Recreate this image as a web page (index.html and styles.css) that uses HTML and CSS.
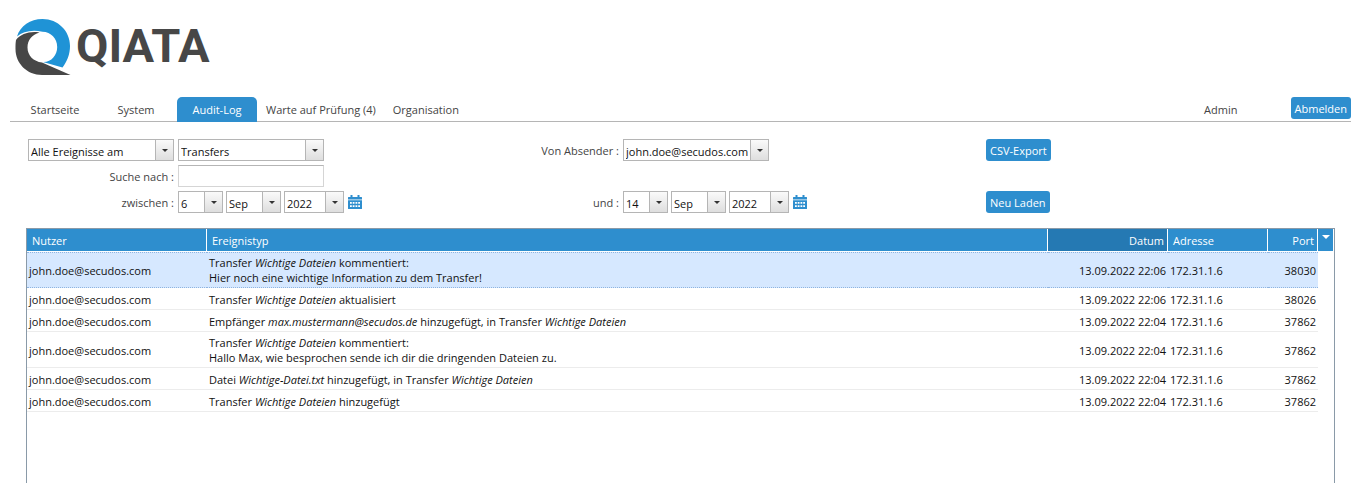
FILE: index.html
```
<!DOCTYPE html>
<html lang="de">
<head>
  <meta charset="UTF-8" />
  <meta name="viewport" content="width=device-width, initial-scale=1.0"/>
  <title>QIATA - Audit-Log</title>
  <link rel="stylesheet" href="styles.css">
</head>
<body>
  <header class="brand">
    <svg class="brand-mark" width="56" height="58" viewBox="0 0 56 58" aria-hidden="true">
      <path fill="#1f93d6" d="M2 18.500C5.500 7.500 15 1 27.500 1 43 1 55 13 55 28c0 8.500-3 15.500-7.500 21.500L28 44c8 .5 14.200-6.500 14.200-15C42.200 20.500 36 14 27.500 13.800 17 11.500 8 13.500 2 18.500z"/>
      <path fill="#474747" d="M1 22C6 15.800 14.500 13 24.500 14.500 17 16.500 12.500 22 12.500 29.500c0 8 6 14 14.500 15L55.500 57H27C12 57 .5 45.500 .5 31c0-3.500 0-6 .5-9z"/>
    </svg>
    <span class="brand-name">QIATA</span>
  </header>

  <nav class="tabs">
    <a class="tab" href="#">Startseite</a>
    <a class="tab" href="#">System</a>
    <a class="tab active" href="#">Audit-Log</a>
    <a class="tab" href="#">Warte auf Prüfung (4)</a>
    <a class="tab" href="#">Organisation</a>
    <span class="user">Admin</span>
    <button class="btn" type="button">Abmelden</button>
  </nav>

  <form class="filters">
    <span class="combo"><select aria-label="Zeitraum"><option>Alle Ereignisse am</option></select></span>
    <span class="combo combo-wide"><select aria-label="Bereich"><option>Transfers</option></select></span>
    <label for="sender">Von Absender :</label>
    <span class="combo combo-wide"><select id="sender"><option>john.doe@secudos.com</option></select></span>
    <div><button class="btn" type="button">CSV-Export</button></div>

    <label class="first" for="search">Suche nach :</label>
    <input class="search" id="search" type="text">

    <label class="first" for="fromDay">zwischen :</label>
    <div class="date">
      <span class="combo day"><select id="fromDay"><option>6</option></select></span>
      <span class="combo month"><select aria-label="Monat von"><option>Sep</option></select></span>
      <span class="combo year"><select aria-label="Jahr von"><option>2022</option></select></span>
      <button class="calendar" type="button" aria-label="Kalender">
        <svg width="14" height="14" viewBox="0 0 14 14">
          <path fill="#2e8ece" d="M0 2.500Q0 2 .5 2H2.500V0h2v2h5V0h2v2h2q.5 0 .5.500V4.500H0zM0 5.300h14v8.200q0 .5-.5.500H.5q-.5 0-.5-.5z"/>
          <path fill="#fff" d="M2 7h1.800v1.800H2zM4.700 7h1.800v1.800H4.700zM7.500 7h1.800v1.800H7.500zM10.200 7H12v1.800h-1.800zM2 10.200h1.800V12H2zM4.700 10.200h1.800V12H4.700zM7.500 10.200h1.800V12H7.500zM10.200 10.200H12V12h-1.800z"/>
        </svg>
      </button>
    </div>
    <label for="toDay">und :</label>
    <div class="date">
      <span class="combo day"><select id="toDay"><option>14</option></select></span>
      <span class="combo month"><select aria-label="Monat bis"><option>Sep</option></select></span>
      <span class="combo year"><select aria-label="Jahr bis"><option>2022</option></select></span>
      <button class="calendar" type="button" aria-label="Kalender">
        <svg width="14" height="14" viewBox="0 0 14 14">
          <path fill="#2e8ece" d="M0 2.500Q0 2 .5 2H2.500V0h2v2h5V0h2v2h2q.5 0 .5.500V4.500H0zM0 5.300h14v8.200q0 .5-.5.500H.5q-.5 0-.5-.5z"/>
          <path fill="#fff" d="M2 7h1.800v1.800H2zM4.700 7h1.800v1.800H4.700zM7.500 7h1.800v1.800H7.500zM10.200 7H12v1.800h-1.800zM2 10.200h1.800V12H2zM4.700 10.200h1.800V12H4.700zM7.500 10.200h1.800V12H7.500zM10.200 10.200H12V12h-1.800z"/>
        </svg>
      </button>
    </div>
    <div><button class="btn" type="button">Neu Laden</button></div>
  </form>

  <main class="log">
    <table>
      <colgroup>
        <col class="col-user"><col><col class="col-date"><col class="col-address"><col class="col-port"><col class="col-menu">
      </colgroup>
      <thead>
        <tr>
          <th>Nutzer</th>
          <th>Ereignistyp</th>
          <th class="num sorted">Datum</th>
          <th>Adresse</th>
          <th class="num">Port</th>
          <th class="menu"><button type="button" aria-label="Spalten"></button></th>
        </tr>
      </thead>
      <tbody>
        <tr class="selected">
          <td>john.doe@secudos.com</td>
          <td>Transfer <i>Wichtige Dateien</i> kommentiert:<br>Hier noch eine wichtige Information zu dem Transfer!</td>
          <td class="num">13.09.2022 22:06</td>
          <td>172.31.1.6</td>
          <td class="num">38030</td>
        </tr>
        <tr>
          <td>john.doe@secudos.com</td>
          <td>Transfer <i>Wichtige Dateien</i> aktualisiert</td>
          <td class="num">13.09.2022 22:06</td>
          <td>172.31.1.6</td>
          <td class="num">38026</td>
        </tr>
        <tr>
          <td>john.doe@secudos.com</td>
          <td>Empfänger <i>max.mustermann@secudos.de</i> hinzugefügt, in Transfer <i>Wichtige Dateien</i></td>
          <td class="num">13.09.2022 22:04</td>
          <td>172.31.1.6</td>
          <td class="num">37862</td>
        </tr>
        <tr>
          <td>john.doe@secudos.com</td>
          <td>Transfer <i>Wichtige Dateien</i> kommentiert:<br>Hallo Max, wie besprochen sende ich dir die dringenden Dateien zu.</td>
          <td class="num">13.09.2022 22:04</td>
          <td>172.31.1.6</td>
          <td class="num">37862</td>
        </tr>
        <tr>
          <td>john.doe@secudos.com</td>
          <td>Datei <i>Wichtige-Datei.txt</i> hinzugefügt, in Transfer <i>Wichtige Dateien</i></td>
          <td class="num">13.09.2022 22:04</td>
          <td>172.31.1.6</td>
          <td class="num">37862</td>
        </tr>
        <tr>
          <td>john.doe@secudos.com</td>
          <td>Transfer <i>Wichtige Dateien</i> hinzugefügt</td>
          <td class="num">13.09.2022 22:04</td>
          <td>172.31.1.6</td>
          <td class="num">37862</td>
        </tr>
      </tbody>
    </table>
  </main>
</body>
</html>
```
FILE: styles.css
```
* {
  box-sizing: border-box;
}

body {
  margin: 0;
  min-height: 100vh;
  display: flex;
  flex-direction: column;
  background: #fff;
  color: #111;
  font-family: "Open Sans", sans-serif;
  font-size: 11px;
  line-height: 15px;
}

button, input, select {
  font: inherit;
  color: inherit;
}

/* logo */
.brand {
  display: flex;
  align-items: center;
  gap: 5px;
  padding: 18px 15px 0;
}

.brand-mark {
  display: block;
}

.brand-name {
  font-family: Roboto, sans-serif;
  font-size: 47px;
  font-weight: 700;
  line-height: 56px;
  padding-bottom: 2px;
  color: #474747;
}

/* navigation */
.tabs {
  display: flex;
  gap: 1px;
  height: 25px;
  margin: 21px 9px 0 10px;
  padding-left: 5px;
  border-bottom: 1px solid #b5b5b5;
}

.tab {
  min-width: 80px;
  height: 25px;
  padding: 5px 8px;
  color: #444;
  text-align: center;
  text-decoration: none;
}

.tab.active {
  background: #2e8ece;
  border-radius: 5px 5px 0 0;
  color: #fff;
}

.user {
  margin-left: auto;
  padding: 5px 52px 0 0;
  color: #444;
}

.btn {
  height: 22px;
  padding: 0 4px;
  border: 0;
  border-radius: 3px;
  background: #2e8ece;
  color: #fff;
  cursor: pointer;
}

/* filters */
.filters {
  display: grid;
  grid-template-columns: 146px 291fr 146px 359fr 365fr;
  grid-auto-rows: 22px;
  gap: 4px;
  margin: 17px 9px 0 28px;
}

.filters label {
  padding-top: 4px;
  color: #444;
  text-align: right;
}

.filters .first {
  grid-column: 1;
}

.search {
  width: 146px;
  padding: 0 3px;
  border: 1px solid #d5d5d5;
  border-top-color: #b5b5b5;
}

.combo {
  position: relative;
  height: 22px;
}

.combo-wide {
  width: 146px;
}

.combo select {
  appearance: none;
  width: 100%;
  height: 22px;
  padding: 3px 17px 0 2px;
  border: 1px solid #b5b5b5;
  border-radius: 0;
  background: #fff;
  color: #111;
}

/* arrow button of the combo box */
.combo::before {
  content: "";
  position: absolute;
  top: 1px;
  right: 1px;
  width: 17px;
  height: 20px;
  border-left: 1px solid #b5b5b5;
  background: linear-gradient(#fafafa, #dedede);
  pointer-events: none;
}

.combo::after {
  content: "";
  position: absolute;
  top: 10px;
  right: 6px;
  border: 3px solid transparent;
  border-top-color: #333;
  border-bottom: 0;
  pointer-events: none;
}

.date {
  display: flex;
  gap: 3px;
}

.day {
  width: 45px;
}

.month {
  width: 55px;
}

.year {
  width: 60px;
}

.calendar {
  padding: 0 1px;
  border: 0;
  background: none;
  cursor: pointer;
}

.calendar svg {
  display: block;
}

/* log table */
.log {
  flex: 1;
  margin: 15px 25px 0 26px;
  border: 1px solid #8a9aa8;
  border-bottom: 0;
}

table {
  width: 100%;
  table-layout: fixed;
  border-collapse: separate;
  border-spacing: 0;
}

.col-user {
  width: 180px;
}

.col-date {
  width: 120px;
}

.col-address {
  width: 100px;
}

.col-port {
  width: 50px;
}

.col-menu {
  width: 16px;
}

th {
  height: 23px;
  padding: 1px 3px 0 5px;
  border-right: 1px solid #fff;
  border-bottom: 1px solid #fff;
  background: #2e8ece;
  color: #fff;
  font-weight: 400;
  text-align: left;
}

th.sorted {
  background: #2579b3;
}

th.menu {
  padding: 0;
  vertical-align: top;
}

.menu button {
  display: block;
  width: 15px;
  height: 15px;
  padding: 0;
  border: 0;
  background: none;
}

.menu button::before {
  content: "";
  display: block;
  width: 0;
  margin: 0 auto;
  border: 4px solid transparent;
  border-top-color: #fff;
  border-bottom: 0;
}

td {
  height: 22px;
  padding: 3px 2px 2px;
  border-bottom: 1px solid #ececec;
}

.selected td {
  padding-top: 2px;
  border-top: 1px dotted #8fb4e0;
  border-bottom: 1px dotted #8fb4e0;
  background: #d6e8ff;
}

th.num, td.num {
  text-align: right;
}
```
